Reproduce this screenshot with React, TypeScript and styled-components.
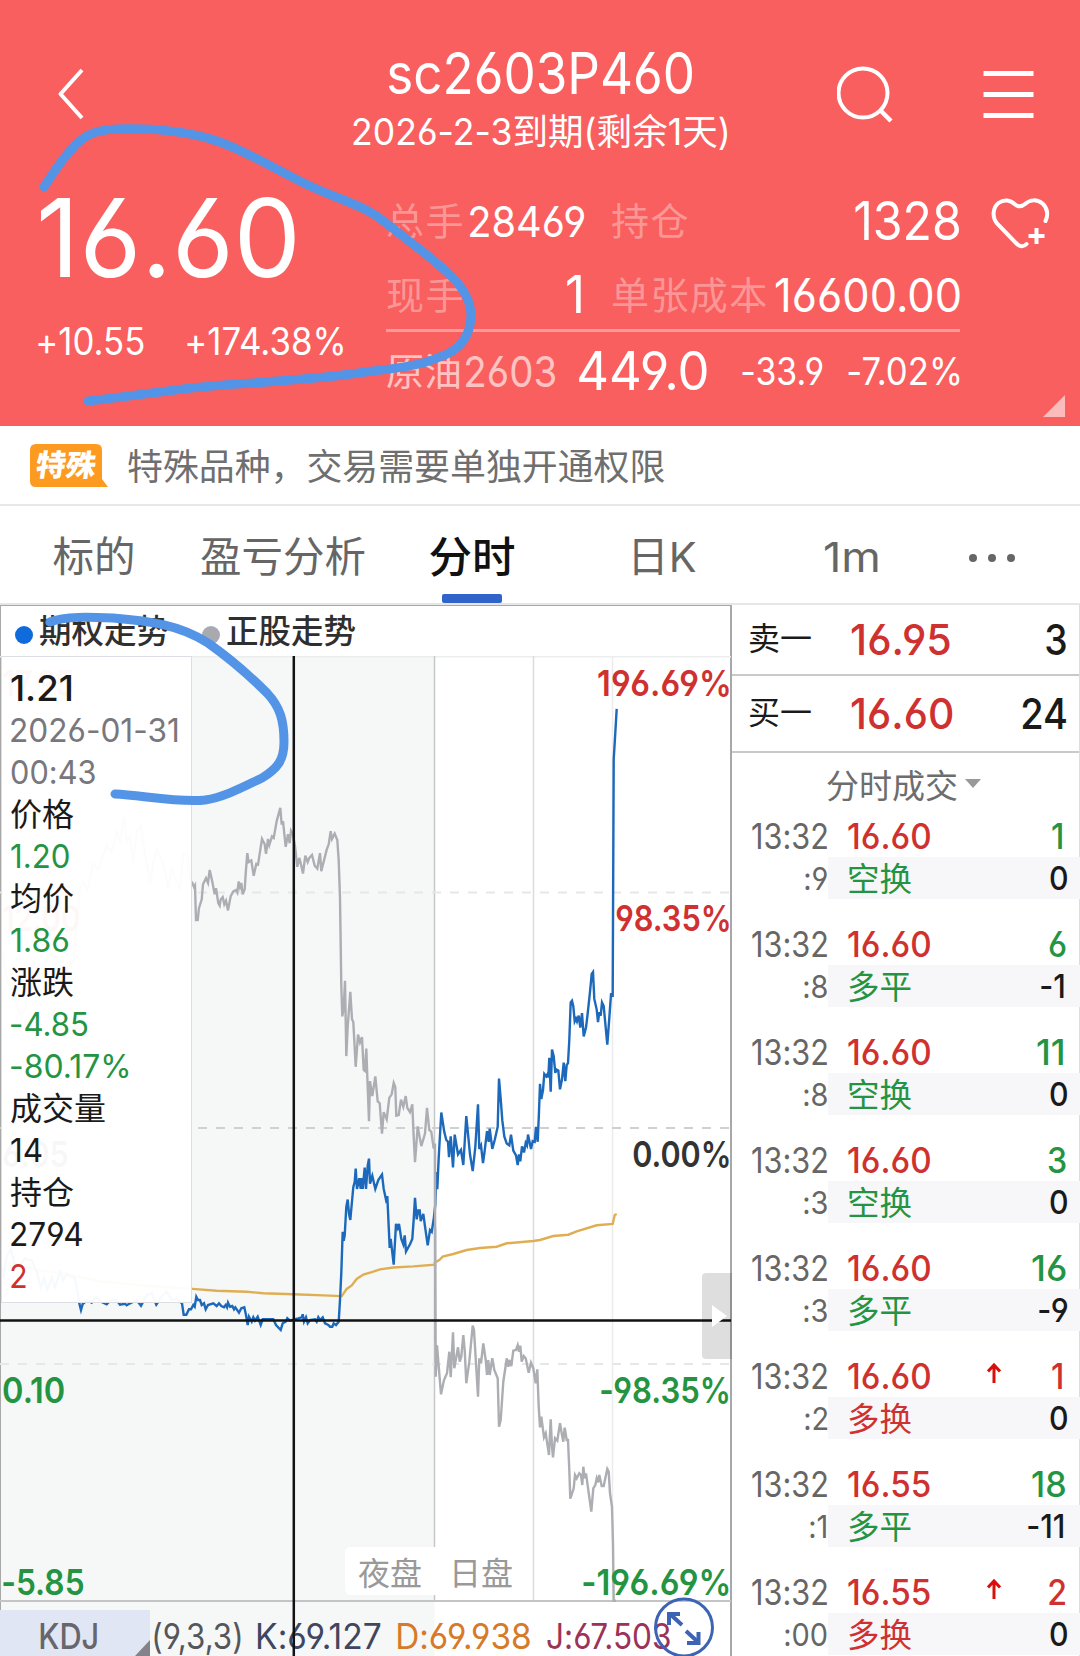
import React, { useLayoutEffect, useRef, useState } from 'react';
import styled, { createGlobalStyle } from 'styled-components';

const RED = '#cf3130';
const GREEN = '#249443';
const INK = '#1a1a1a';
const PEN = '#5494e6';
const FONT = 'Inter, "Noto Sans CJK SC", sans-serif';

const GlobalStyle = createGlobalStyle`
  * { box-sizing: border-box; }
  html, body { margin: 0; padding: 0; background: #fff; }
  body {
    font-family: ${FONT};
    font-feature-settings: "cv03", "cv04", "calt" 0;
    line-height: 1;
    white-space: nowrap;
  }
`;

const Screen = styled.div`
  position: relative;
  width: 1080px;
  height: 1656px;
  overflow: hidden;
  background: #fff;
`;

/* ---------- condensed figures ---------- */

const FigureBox = styled.span<{ $size: number; $color?: string; $weight?: number }>`
  display: inline-block;
  flex: none;
  text-align: left;
  font-size: ${(p) => p.$size}px;
  color: ${(p) => p.$color ?? '#fff'};
  font-weight: ${(p) => p.$weight ?? 400};
`;

const FigureText = styled.span`
  display: inline-block;
  transform-origin: 0 50%;
`;

type NumProps = {
  size: number;
  color?: string;
  weight?: number;
  /* Drawn width in pixels; without it the text is condensed by a fixed ratio. */
  w?: number;
  children: string;
};

/* Condenses its text horizontally, so the box is as wide as the drawn figures. */
function Num({ size, color, weight = 400, w, children }: NumProps) {
  const ref = useRef<HTMLSpanElement>(null);
  const [fit, setFit] = useState({ k: 1, left: 0, width: w });

  useLayoutEffect(() => {
    const advance = ref.current!.offsetWidth;
    const ctx = document.createElement('canvas').getContext('2d')!;
    ctx.font = `${weight} ${size}px ${FONT}`;
    const m = ctx.measureText(children);
    const left = -m.actualBoundingBoxLeft;
    const right = m.width - m.actualBoundingBoxRight;
    const drawn = advance - left - right;
    const k = w ? w / drawn : 0.92;
    setFit({ k, left: left * k, width: drawn * k });
  }, [children, size, weight, w]);

  return (
    <FigureBox $size={size} $color={color} $weight={weight} style={{ width: fit.width }}>
      <FigureText ref={ref} style={{ transform: `translateX(${-fit.left}px) scaleX(${fit.k})` }}>
        {children}
      </FigureText>
    </FigureBox>
  );
}

/* ---------- header ---------- */

const Header = styled.header`
  height: 426px;
  background: #f85f5e;
  color: #fff;
  padding: 46px 0 0;
  position: relative;
`;

const TopBar = styled.div`
  display: grid;
  grid-template-columns: 330px 1fr 330px;
  height: 106px;
`;

const BackSlot = styled.div`
  padding: 21px 0 0 55px;
`;

const TitleBlock = styled.div`
  display: flex;
  flex-direction: column;
  align-items: center;
`;

const Title = styled.h1`
  margin: 0;
  height: 55px;
  line-height: 54px;
  font-size: 57px;
  font-weight: 400;
`;

const Subtitle = styled.div`
  height: 62px;
  line-height: 62px;
`;

const Actions = styled.div`
  display: flex;
  gap: 84px;
  padding: 18px 0 0 87px;
`;

const Quote = styled.div`
  display: flex;
  height: 274px;
`;

const PriceBlock = styled.div`
  width: 386px;
  padding-left: 38px;
`;

const Price = styled.div`
  height: 172px;
  line-height: 170px;
  padding-left: 3px;
`;

const ChangeRow = styled.div`
  display: flex;
  gap: 43px;
  height: 36px;
  align-items: center;
`;

const Stats = styled.div`
  width: 574px;
  padding-top: 31px;
`;

const StatRow = styled.div<{ $h: number }>`
  display: flex;
  gap: 26px;
  height: ${(p) => p.$h}px;
`;

const Stat = styled.div<{ $w: number; $indent?: number }>`
  display: flex;
  width: ${(p) => p.$w}px;
  margin-left: ${(p) => p.$indent ?? 0}px;
  align-items: center;
  justify-content: space-between;
`;

const StatLabel = styled.span`
  font-size: 38px;
  letter-spacing: 1.4px;
  color: rgba(255, 255, 255, 0.36);
`;

const Rule = styled.div`
  height: 3px;
  margin-top: -2px;
  background: #fd9a99;
`;

const Underlying = styled.div`
  display: flex;
  height: 78px;
  align-items: center;
`;

const UnderlyingName = styled.span`
  display: flex;
  align-items: center;
  gap: 4px;
  width: 193px;
  font-size: 38px;
  color: rgba(255, 255, 255, 0.64);
`;

const UnderlyingPrice = styled.span`
  width: 163px;
`;

const UnderlyingChange = styled.span`
  display: flex;
  flex: 1;
  justify-content: space-between;
`;

const FavSlot = styled.div`
  padding: 44px 0 0 30px;
`;

const Corner = styled.i`
  position: absolute;
  right: 15px;
  bottom: 9px;
  border-left: 22px solid transparent;
  border-bottom: 22px solid #fcbcbc;
`;

/* ---------- notice and tabs ---------- */

const Notice = styled.div`
  display: flex;
  align-items: center;
  height: 80px;
  padding: 0 0 0 30px;
  gap: 19px;
  border-bottom: 2px solid #e8e8e8;
  color: #6f6f6f;
  font-size: 35.9px;
`;

const NoticeText = styled.span`
  padding-top: 6px;
`;

const Badge = styled.div`
  position: relative;
  width: 78px;
  height: 43px;
  display: flex;
  align-items: center;
  padding-left: 6px;
  color: #fff;
  font-size: 30px;
  font-weight: 900;
`;

const BadgeShape = styled.svg`
  position: absolute;
  inset: 0;
`;

const BadgeText = styled.span`
  position: relative;
  transform: skewX(-8deg);
`;

const Tabs = styled.nav`
  display: flex;
  height: 99px;
  align-items: center;
  border-bottom: 2px solid #e6e6e6;
`;

const Tab = styled.div<{ $w: number; $active?: boolean }>`
  position: relative;
  width: ${(p) => p.$w}px;
  height: 97px;
  display: flex;
  align-items: center;
  justify-content: center;
  font-size: ${(p) => (p.$active ? 43.5 : 41.5)}px;
  font-weight: ${(p) => (p.$active ? 500 : 400)};
  color: ${(p) => (p.$active ? '#111' : '#666')};
  padding: 6px 0 0;
`;

const TabMark = styled.i`
  position: absolute;
  bottom: 0;
  width: 60px;
  height: 9px;
  border-radius: 2px;
  background: #3064c8;
`;

const Dots = styled.div`
  display: flex;
  gap: 11px;
  i { width: 8px; height: 8px; border-radius: 50%; background: #666; }
`;

/* ---------- chart ---------- */

const Body = styled.div`
  display: flex;
  height: 1051px;
`;

const ChartPane = styled.section`
  width: 732px;
  border: solid #a8a8a8;
  border-width: 1px 2px 0 1px;
  display: flex;
  flex-direction: column;
`;

const Legend = styled.div`
  display: flex;
  height: 50px;
  align-items: center;
  padding: 3px 0 0 14px;
  font-size: 32.5px;
  font-weight: 500;
  color: #2f2f2f;
`;

const LegendItem = styled.span`
  margin: 0 33px 0 6px;
`;

const LegendDot = styled.i<{ $c: string }>`
  width: 18px;
  height: 18px;
  margin-top: 5px;
  border-radius: 50%;
  background: ${(p) => p.$c};
`;

const Plot = styled.div`
  position: relative;
  margin-left: -1px;
  width: 732px;
  height: 1000px;
`;

const PlotSvg = styled.svg`
  display: block;
`;

const CrossSvg = styled.svg`
  position: absolute;
  inset: 0;
`;

const AxisLabel = styled.span<{ $y: number; $side: 'left' | 'right' }>`
  position: absolute;
  top: ${(p) => p.$y - 17 - 656}px;
  ${(p) => (p.$side === 'left' ? 'left: 3px;' : 'right: 3px;')}
  line-height: 36px;
`;

const Session = styled.div`
  position: absolute;
  left: 345px;
  top: 891px;
  height: 48px;
  width: 178px;
  padding: 6px 0 0 13px;
  display: flex;
  align-items: center;
  gap: 27px;
  background: #fff;
  border-radius: 6px;
  color: #999;
  font-size: 32px;
`;

const Tooltip = styled.div`
  position: absolute;
  left: 1px;
  top: 0;
  width: 191px;
  height: 647px;
  padding: 11px 0 0 8px;
  background: rgba(255, 255, 255, 0.965);
  border: 1px solid #dcdee4;
`;

const TipLine = styled.div`
  height: 42px;
  line-height: 42px;
  font-size: 32px;
  color: ${INK};
`;

const TipNum = styled.div`
  height: 42px;
  line-height: 41px;
  padding-left: 1px;
`;

const Handle = styled.div`
  position: absolute;
  left: 702px;
  top: 617px;
  width: 30px;
  height: 86px;
  border-radius: 4px 0 0 4px;
  background: rgba(0, 0, 0, 0.13);
  display: flex;
  align-items: center;
  justify-content: flex-end;
  padding: 0 5px 0 0;
  &::after {
    content: '';
    border: solid transparent;
    border-width: 11px 0 11px 15px;
    border-left-color: #fff;
  }
`;

const Indicator = styled.div`
  position: absolute;
  left: 0;
  top: 954px;
  height: 46px;
  width: 730px;
  display: flex;
  align-items: center;
`;

const IndicatorName = styled.div`
  position: relative;
  width: 150px;
  height: 46px;
  padding: 6px 0 0 40px;
  line-height: 40px;
  background: #e1e6f4;
  &::after {
    content: '';
    position: absolute;
    right: 0;
    bottom: 0;
    border-left: 15px solid transparent;
    border-bottom: 16px solid #84828a;
  }
`;

const IndicatorValues = styled.div`
  display: flex;
  gap: 17px;
  padding: 6px 0 0 4px;
`;

const Expand = styled.svg`
  position: absolute;
  left: 653px;
  top: 940px;
`;

/* ---------- order book ---------- */

const Book = styled.section`
  width: 348px;
  border-right: 1px solid #ddd;
`;

const Level = styled.div<{ $h: number }>`
  display: flex;
  align-items: center;
  height: ${(p) => p.$h}px;
  padding: 0 13px 1px 16px;
  border-bottom: 2px solid #c9c9c9;
`;

const LevelName = styled.span`
  width: 103px;
  font-size: 32px;
  color: ${INK};
`;

const LevelPrice = styled.span`
  flex: 1;
`;

const BookHeader = styled.div`
  display: flex;
  align-items: center;
  gap: 7px;
  height: 61px;
  padding: 5px 0 0 94px;
  color: #6d6d6d;
  font-size: 33px;
`;

const Caret = styled.i`
  border: solid transparent;
  border-width: 9px 8px 0;
  border-top-color: #999;
  margin-top: -6px;
`;

const Trade = styled.div`
  height: 108px;
  display: grid;
  grid-template-columns: 96px 252px;
  grid-template-rows: 43px 42px;
`;

const TimeCell = styled.div`
  display: flex;
  align-items: center;
  justify-content: flex-end;
  padding: 2px 1px 0 0;
`;

const ValueCell = styled.div<{ $shade?: boolean }>`
  display: flex;
  align-items: center;
  justify-content: space-between;
  padding: ${(p) => (p.$shade ? '5px 13px 0 19px' : '2px 14px 0 20px')};
  background: ${(p) => (p.$shade ? '#f7f7fa' : 'transparent')};
`;

const Kind = styled.span<{ $c: string }>`
  font-size: 32.5px;
  color: ${(p) => p.$c};
`;

const Quantity = styled.span`
  display: flex;
  justify-content: space-between;
  align-items: center;
  width: 79px;
`;

const Plain = styled.span<{ $inset: number }>`
  margin-left: auto;
  margin-right: ${(p) => p.$inset}px;
  display: flex;
`;

const Delta = styled.span<{ $inset: number }>`
  display: flex;
  margin-right: ${(p) => p.$inset}px;
  margin-top: -4px;
`;

const UpArrow = styled.svg`
  margin-top: -7px;
`;

const Ink = styled.svg`
  position: absolute;
  inset: 0;
  pointer-events: none;
`;

/* ---------- data ---------- */

type Axis = [number, number, number, number];

/* Scales a flat list of samples into plot coordinates. */
const trace = (s: string, [ox, oy, sx, sy]: Axis) =>
  s.trim().split(/\s+/).map((p) => {
    const [x, y] = p.split(',').map(Number);
    return `${(ox + x / sx).toFixed(1)},${(oy + y / sy).toFixed(1)}`;
  }).join(' ');

const NIGHT_A: Axis = [0, 640, 3, 2.24];
const NIGHT_B: Axis = [180, 780, 3, 2.8];
const NIGHT_C: Axis = [0, 1280, 3, 3];
const DAY_A: Axis = [400, 640, 3, 2.8];
const DAY_B: Axis = [400, 1160, 3, 3];

const GREY = [
  trace('8,700 20,760 40,790 60,840 75,830 100,720 120,760 150,700 190,740 220,720 240,560 250,540 262,560 280,500 295,515 320,460 335,475 350,430 360,450 372,395 380,450 390,440 400,500 410,430 422,415 435,480 450,545 460,500 470,470 490,500 505,555 515,515 540,555 550,480 560,480 574,545', NIGHT_A),
  trace('37,288 42,300 45,295 48,392 53,392 57,358 65,335 69,292 78,275 84,288 89,252 97,285 104,320 108,303 115,345 119,352 122,335 128,328 133,348 138,338 144,365 152,325 160,312 168,308 172,315 176,284 180,300 184,288 188,320 194,306 197,262 202,205 206,230 214,225 221,268 229,235 234,237 246,165 254,180 258,207 264,165 268,182 276,158 281,162 290,115 301,78 305,125 309,115 317,187 324,152 329,177 333,142 338,150 345,185 352,243 358,218 364,240 369,262 376,212 383,230 388,218 396,210 404,240 412,248 420,205 424,255 432,225 440,195 446,180 452,143 456,165 464,150 472,168 476,225 480,330 484,575 487,662 491,640 495,562 499,773 503,690 511,593 516,670 520,678 527,803 534,713 540,735 546,720 551,812 555,815 559,752 563,860 567,955 570,843 577,885 586,830 593,900 599,905 606,990 611,930 620,950 628,890 635,880 641,848 646,860 649,940 656,938 663,895 670,915 677,885 682,918 690,930 697,908 701,1000 705,1070 713,970 724,1025 735,990 741,918 748,980 754,985 761,1032 765,1018 766,1568', NIGHT_B),
  trace('106,200 107,650 111,556 123,703 132,660 141,640 148,575 152,652 159,517 163,625 174,562 179,605 184,590 190,525 194,570 199,670 208,605 218,497 222,510 234,710 238,595 243,610 250,550 257,600 261,645 265,600 269,645 277,595 283,630 293,655 297,800 302,780 310,665 316,625 320,595 325,620 328,600 334,618 340,572 348,570 353,556 357,575 361,557 365,605 371,588 377,595 386,638 393,608 400,625 407,670 412,628 416,740 420,802 424,770 432,832 437,820 447,885 452,778 456,860 459,892 465,835 472,842 480,790 485,820 490,845 494,803 500,840 504,840 508,930 511,1016 521,985 525,945 530,955 538,940 543,945 547,975 550,920 554,955 558,940 574,1055 580,985 586,975 590,955 594,967 598,945 605,978 611,978 618,945 622,927 626,935 630,1000 636,1040 639,1150 641,1322 648,1322', DAY_B),
].join(' ');

const BLUE = [
  trace('10,1430 20,1380 32,1365 45,1400 60,1400 75,1385 95,1390 110,1415 122,1450 132,1430 142,1455 155,1430 165,1450 180,1415 190,1435 200,1420 225,1430 236,1475', NIGHT_A),
  trace('238,70 243,90 248,72 262,60 275,68 290,50 305,66 320,73 332,60 350,60 360,74 375,71 380,76 390,70 410,60 423,77 440,45 455,40 469,74 485,50 500,35 515,60 530,58 546,70 551,104 559,104 567,88 573,88 580,75 584,80 589,50 594,60 600,60 605,75 612,70 617,88 624,75 640,70 650,78 657,70 664,78 672,82 677,75 681,82 684,68 690,80 697,78 702,88 706,82 717,98 724,85 733,82 738,105 743,135 747,110 755,125 760,112 765,122 773,110 782,135 788,118 820,118 828,135 842,150 848,130 857,125 862,115 870,122 882,118 895,115 905,112 908,103 912,125 918,112 923,130 930,120 945,118 950,125 955,112 960,120 968,112 975,130 985,135 990,140 997,140 1001,130 1008,135 1016,125 1020,60', NIGHT_C),
  trace('484,1380 488,1265 491,1290 494,1275 499,1195 503,1175 507,1215 511,1232 520,1140 524,1125 527,1088 531,1145 538,1115 542,1145 545,1115 548,1145 554,1085 558,1145 563,1080 567,1060 570,1130 577,1108 586,1145 595,1120 606,1105 611,1145 618,1175 622,1165 629,1310 632,1285 641,1357 648,1243 653,1255 657,1243 664,1285 670,1300 674,1275 678,1320 690,1300 697,1285 701,1230 705,1170 710,1230 715,1205 719,1205 722,1235 730,1215 735,1250 743,1303 750,1260 755,1265 761,1230 766,1190', NIGHT_B),
  trace('109,1490 112,1538 116,1450 119,1400 124,1323 133,1378 139,1400 144,1405 147,1448 152,1390 159,1477 164,1385 174,1440 183,1428 190,1470 199,1333 210,1440 218,1487 226,1420 234,1300 238,1425 243,1415 249,1465 254,1430 261,1375 266,1405 269,1368 277,1425 284,1400 293,1363 297,1228 302,1285 307,1345 313,1390 320,1410 328,1415 333,1385 340,1430 348,1443 353,1470 357,1440 361,1460 366,1418 372,1435 377,1408 381,1415 384,1385 393,1425 398,1403 404,1405 408,1363 413,1405 417,1320 420,1243 424,1285 429,1260 433,1215 439,1222 443,1215 445,1225 448,1170 452,1265 456,1147 461,1165 466,1212 470,1203 475,1205 480,1258 486,1230 491,1183 496,1235 500,1190 504,1185 508,1120 512,1015 516,1010 520,1025 524,1068 528,1060 531,1068 536,1052 541,1085 546,1045 551,1110 558,1085 562,1055 570,985 575,935 579,930 583,1005 590,1035 594,1070 598,1042 602,1052 606,1015 611,1025 617,1085 622,1133 627,1070 633,993 638,995 641,335 646,260 650,193', DAY_A),
].join(' ');

const AVERAGE = [
  trace('10,1390 50,1400 120,1412 200,1420 300,1437 450,1447 570,1453', NIGHT_A),
  trace('37,1425 110,1430 200,1433 250,1437 340,1440 430,1443 485,1445 500,1425 515,1415 530,1397 550,1385 575,1378 600,1370 640,1365 700,1362 765,1357', NIGHT_B),
  trace('104,308 118,300 128,290 160,282 200,270 240,264 290,260 320,250 400,243 420,240 440,234 460,228 505,224 530,214 590,196 638,192 644,165 650,162', DAY_B),
].join(' ');

const AXIS = [
  { y: 683, left: '17.95', lw: 70, right: '196.69%', rw: 131, c: RED },
  { y: 918, left: '12.00', lw: 76, right: '98.35%', rw: 113, c: RED },
  { y: 1154, left: '6.05', lw: 65, right: '0.00%', rw: 96, c: '#333' },
  { y: 1390, left: '0.10', lw: 61, right: '-98.35%', rw: 128, c: GREEN },
  { y: 1582, left: '-5.85', lw: 80, right: '-196.69%', rw: 146, c: GREEN },
];

const TRADES = [
  { s: ':9', price: '16.60', qty: '1', kind: '空换', delta: '0', c: GREEN },
  { s: ':8', price: '16.60', qty: '6', kind: '多平', delta: '-1', c: GREEN },
  { s: ':8', price: '16.60', qty: '11', qw: 26, kind: '空换', delta: '0', c: GREEN },
  { s: ':3', price: '16.60', qty: '3', kind: '空换', delta: '0', c: GREEN },
  { s: ':3', price: '16.60', qty: '16', qw: 34, kind: '多平', delta: '-9', c: GREEN },
  { s: ':2', price: '16.60', qty: '1', kind: '多换', delta: '0', c: RED, up: true },
  { s: ':1', price: '16.55', qty: '18', qw: 34, kind: '多平', delta: '-11', c: GREEN },
  { s: ':00', price: '16.55', qty: '2', kind: '多换', delta: '0', c: RED, up: true },
];

/* A trailing 1 is narrower than its digit cell. */
const inset = (s: string) => (s.endsWith('1') ? 3 : 0);

/* ---------- components ---------- */

function QuoteHeader() {
  return (
    <Header>
      <TopBar>
        <BackSlot>
          <svg width="32" height="54" fill="none" stroke="#fff" strokeWidth="4">
            <path d="M27 3 5.500 27 27 51" strokeLinejoin="round" />
          </svg>
        </BackSlot>
        <TitleBlock>
          <Title><Num size={57.5} w={303}>sc2603P460</Num></Title>
          <Subtitle><Num size={36.5} w={375}>2026-2-3到期(剩余1天)</Num></Subtitle>
        </TitleBlock>
        <Actions>
          <svg width="60" height="64" fill="none" stroke="#fff" strokeWidth="4">
            <circle cx="26" cy="29" r="24.500" />
            <path d="M43 46 54 57" strokeWidth="4.500" />
          </svg>
          <svg width="54" height="60" stroke="#fff" strokeWidth="5">
            <path d="M2.500 9.500H52.500M2.500 30.500H52.500M2.500 51.500H52.500" />
          </svg>
        </Actions>
      </TopBar>
      <Quote>
        <PriceBlock>
          <Price><Num size={109} w={254}>16.60</Num></Price>
          <ChangeRow>
            <Num size={37.5} w={106}>+10.55</Num>
            <Num size={37.5} w={156}>+174.38%</Num>
          </ChangeRow>
        </PriceBlock>
        <Stats>
          <StatRow $h={76}>
            <Stat $w={199}><StatLabel>总手</StatLabel><Num size={43} w={115}>28469</Num></Stat>
            <Stat $w={348}><StatLabel>持仓</StatLabel><Num size={53} w={104}>1328</Num></Stat>
          </StatRow>
          <StatRow $h={72}>
            <Stat $w={195}><StatLabel>现手</StatLabel><Num size={52} w={14}>1</Num></Stat>
            <Stat $w={349} $indent={4}><StatLabel>单张成本</StatLabel><Num size={46} w={184}>16600.00</Num></Stat>
          </StatRow>
          <Rule />
          <Underlying>
            <UnderlyingName>原油<Num size={43} w={89} color="inherit">2603</Num></UnderlyingName>
            <UnderlyingPrice><Num size={53} w={128}>449.0</Num></UnderlyingPrice>
            <UnderlyingChange>
              <Num size={38.5} w={81}>-33.9</Num>
              <Num size={38.5} w={112}>-7.02%</Num>
            </UnderlyingChange>
          </Underlying>
        </Stats>
        <FavSlot>
          <svg width="64" height="54" fill="none" stroke="#fff" strokeWidth="4" strokeLinecap="round">
            <path d="M36.500 48C33.500 51.500 29.500 50.500 27 48L7.500 28C1 20.500 3.500 11 8.500 7C14 3 20.500 4 24.500 8C28 11 31.500 11 35 8C40 3.500 47 3 52.500 7.500C57.500 12 58.500 19 55.500 25" />
            <path d="M46.500 32V48M38.500 40H54.500" strokeLinecap="butt" strokeWidth="4" />
          </svg>
        </FavSlot>
      </Quote>
      <Corner />
    </Header>
  );
}

function Chart() {
  return (
    <ChartPane>
      <Legend>
        <LegendDot $c="#0f6bdc" /><LegendItem>期权走势</LegendItem>
        <LegendDot $c="#a9aab0" /><LegendItem>正股走势</LegendItem>
      </Legend>
      <Plot>
        <PlotSvg width="732" height="1000" viewBox="0 656 732 1000" fill="none">
          <rect x="1" y="656" width="433.500" height="1000" fill="#f6f8f8" />
          <path d="M0 656.500H731" stroke="#eceeee" strokeWidth="2" />
          <path d="M434.500 656V1601" stroke="#c6c7c8" strokeWidth="1.500" />
          <path d="M533.500 656V1601" stroke="#dcdcdc" strokeWidth="1.500" />
          <path d="M612.500 656V1601" stroke="#ececec" strokeWidth="1.500" />
          <path d="M0 892.500H731M0 1364H731" stroke="#e6e8e8" strokeWidth="2" strokeDasharray="9 9" />
          <path d="M0 1128H731" stroke="#cfd0d0" strokeWidth="2" strokeDasharray="9 9" />
          <path d="M0 1601H731" stroke="#c4c4c6" strokeWidth="2" />
          <polyline points={AVERAGE} stroke="#dfae53" strokeWidth="2.400" />
          <polyline points={BLUE} stroke="#1c69bb" strokeWidth="2.400" />
          <polyline points={GREY} stroke="#adaeb3" strokeWidth="2.400" />
        </PlotSvg>
        {AXIS.map((a) => (
          <React.Fragment key={a.y}>
            <AxisLabel $side="left" $y={a.y}><Num size={35.5} weight={600} color={a.c} w={a.lw}>{a.left}</Num></AxisLabel>
            <AxisLabel $side="right" $y={a.y}><Num size={35.5} weight={600} color={a.c} w={a.rw}>{a.right}</Num></AxisLabel>
          </React.Fragment>
        ))}
        <Session><span>夜盘</span><span>日盘</span></Session>
        <Indicator>
          <IndicatorName><Num size={35} weight={500} color="#66666c" w={57}>KDJ</Num></IndicatorName>
          <IndicatorValues>
            <Num size={35} w={87} color="#55565a">(9,3,3)</Num>
            <Num size={35} w={123} color="#40465f">K:69.127</Num>
            <Num size={35} w={132} color="#d67a2a">D:69.938</Num>
            <Num size={35} w={123} color="#9b3358">J:67.503</Num>
          </IndicatorValues>
        </Indicator>
        <CrossSvg width="732" height="1000" stroke="#101214" strokeWidth="2.500">
          <path d="M293.800 0V1000M0 664.500H731" />
        </CrossSvg>
        <Tooltip>
          <TipNum><Num size={35} weight={500} color={INK} w={60}>1.21</Num></TipNum>
          <TipNum><Num size={32.5} color="#77777d" w={167}>2026-01-31</Num></TipNum>
          <TipNum><Num size={32.5} color="#77777d" w={84}>00:43</Num></TipNum>
          <TipLine>价格</TipLine>
          <TipNum><Num size={32.5} color={GREEN} w={58}>1.20</Num></TipNum>
          <TipLine>均价</TipLine>
          <TipNum><Num size={32.5} color={GREEN} w={58}>1.86</Num></TipNum>
          <TipLine>涨跌</TipLine>
          <TipNum><Num size={32.5} color={GREEN} w={76}>-4.85</Num></TipNum>
          <TipNum><Num size={32.5} color={GREEN} w={118}>-80.17%</Num></TipNum>
          <TipLine>成交量</TipLine>
          <TipNum><Num size={32.5} color={INK} w={31}>14</Num></TipNum>
          <TipLine>持仓</TipLine>
          <TipNum><Num size={32.5} color={INK} w={72}>2794</Num></TipNum>
          <TipNum><Num size={32.5} color={RED} w={15}>2</Num></TipNum>
        </Tooltip>
        <Handle />
        <Expand width="62" height="62" fill="none" stroke="#3c63b4" strokeWidth="3">
          <circle cx="31" cy="31.500" r="28.500" />
          <path d="M29 29 17 18M33 35 45 46" strokeWidth="4" />
          <path d="M16 29V18H27M34 47H45.500V36" strokeWidth="4" />
        </Expand>
      </Plot>
    </ChartPane>
  );
}

function OrderBook() {
  return (
    <Book>
      <Level $h={71}>
        <LevelName>卖一</LevelName>
        <LevelPrice><Num size={43} weight={500} color={RED} w={99}>16.95</Num></LevelPrice>
        <Num size={43} weight={500} color={INK} w={20}>3</Num>
      </Level>
      <Level $h={77}>
        <LevelName>买一</LevelName>
        <LevelPrice><Num size={43} weight={500} color={RED} w={102}>16.60</Num></LevelPrice>
        <Num size={43} weight={500} color={INK} w={44}>24</Num>
      </Level>
      <BookHeader>分时成交<Caret /></BookHeader>
      {TRADES.map((t, i) => (
        <Trade key={i}>
          <TimeCell><Num size={35} color="#666" w={75}>13:32</Num></TimeCell>
          <ValueCell>
            <Num size={35} weight={500} color={RED} w={82}>{t.price}</Num>
            <Quantity>
              {t.up && (
                <UpArrow width="14" height="20" fill="none" stroke="#d8100c" strokeWidth="3">
                  <path d="M7 20V2M1 8.500 7 2l6 6.500" />
                </UpArrow>
              )}
              <Plain $inset={inset(t.qty)}><Num size={35} weight={500} color={t.c} w={t.qw}>{t.qty}</Num></Plain>
            </Quantity>
          </ValueCell>
          <TimeCell><Num size={31.5} color="#666">{t.s}</Num></TimeCell>
          <ValueCell $shade>
            <Kind $c={t.c}>{t.kind}</Kind>
            <Delta $inset={inset(t.delta)}><Num size={33} weight={500} color={INK}>{t.delta}</Num></Delta>
          </ValueCell>
        </Trade>
      ))}
    </Book>
  );
}

export default function App() {
  return (
    <Screen>
      <GlobalStyle />
      <QuoteHeader />
      <Notice>
        <Badge>
          <BadgeShape width="78" height="43">
            <path d="M6 0H66Q72 0 72 6V35L78 43H6Q0 43 0 37V6Q0 0 6 0Z" fill="#fd9a20" />
          </BadgeShape>
          <BadgeText>特殊</BadgeText>
        </Badge>
        <NoticeText>特殊品种，交易需要单独开通权限</NoticeText>
      </Notice>
      <Tabs>
        <Tab $w={188}>标的</Tab>
        <Tab $w={190}>盈亏分析</Tab>
        <Tab $w={188} $active>分时<TabMark /></Tab>
        <Tab $w={192}>日K</Tab>
        <Tab $w={186}><Num size={41.5} w={54} color="#666">1m</Num></Tab>
        <Tab $w={96}><Dots><i /><i /><i /></Dots></Tab>
      </Tabs>
      <Body>
        <Chart />
        <OrderBook />
      </Body>
      <Ink width="1080" height="1656" fill="none" stroke={PEN} strokeWidth="9" strokeLinecap="round" strokeLinejoin="round">
        <path d="M44 187C55 170 63 158 71 150C82 137 92 130 117 129C150 128 185 130 220 142C250 153 280 172 310 186C345 202 364 205 386 223C400 234 413 244 427 255C450 274 470 290 471 314C471 333 463 350 437 358C420 366 390 369 365 372C330 378 280 381 224 385C190 387 150 394 88 401" />
        <path d="M50 622C65 616 90 617 113 618C150 621 180 625 208 643C225 655 250 676 267 693C280 707 284 720 284 742C284 760 278 768 262 778C245 786 225 797 205 800C180 803 140 795 115 794" />
      </Ink>
    </Screen>
  );
}
